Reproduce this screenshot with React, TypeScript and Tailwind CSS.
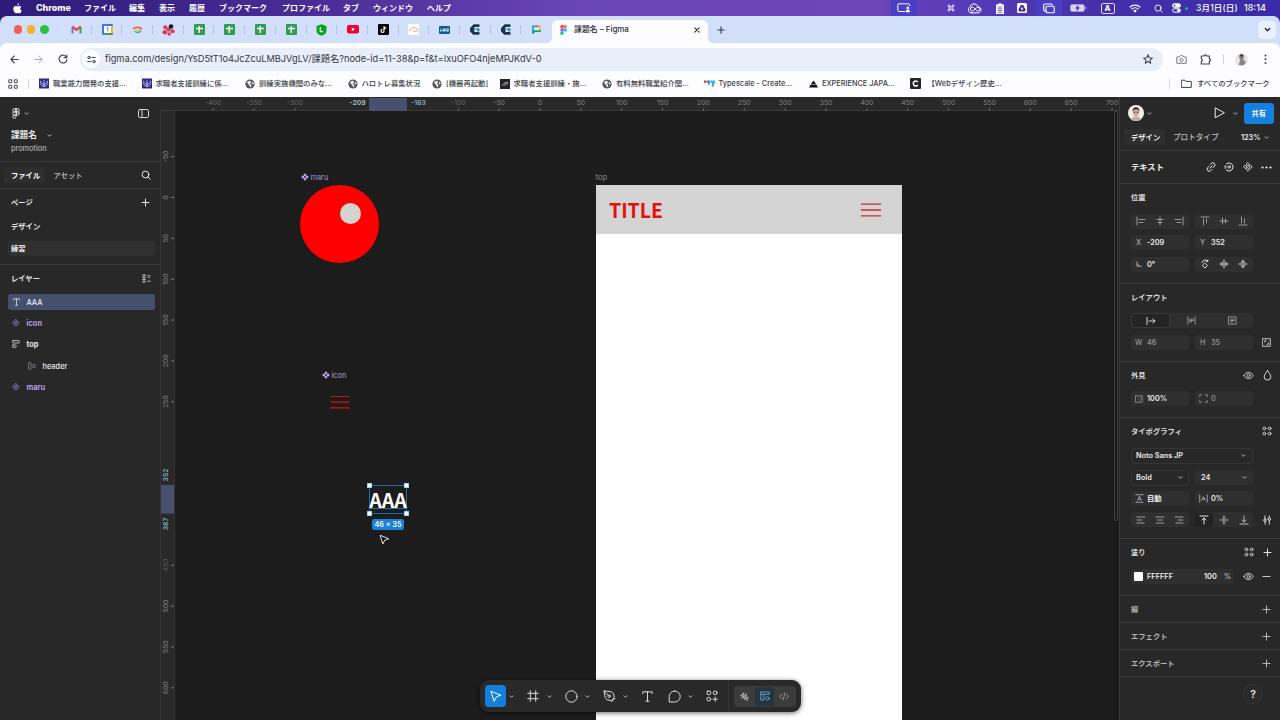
import React from "react";

type Kids = { children?: React.ReactNode };

function Ico({ s = 12, w = 1.6, c = "", vb = "0 0 24 24", h, children }: Kids & { s?: number; w?: number; c?: string; vb?: string; h?: number }) {
  return (
    <svg width={s} height={h ?? s} viewBox={vb} fill="none" stroke="currentColor" strokeWidth={w} strokeLinecap="round" strokeLinejoin="round" className={"shrink-0 " + c}>
      {children}
    </svg>
  );
}

const Chevron = ({ c = "text-[#c4c4c4]" }: { c?: string }) => (
  <Ico s={5} w={1.1} vb="0 0 6 6" c={c}><path d="M1.2 2.2 3 4 4.8 2.2" /></Ico>
);
const Plus = ({ c = "text-[#e4e4e4]" }: { c?: string }) => (
  <Ico s={9} w={1} vb="0 0 9 9" c={c}><path d="M4.5 1v7M1 4.5h7" /></Ico>
);
const Search = ({ s = 10, c = "" }: { s?: number; c?: string }) => (
  <Ico s={s} w={1} vb="0 0 10 10" c={c}><circle cx="4.5" cy="4.5" r="3.4" /><path d="m7 7 2.2 2.2" /></Ico>
);
const Component = ({ s = 9 }: { s?: number }) => (
  <Ico s={s} w={0.9} vb="0 0 10 10">
    <path d="M5 .8 6.6 2.4 5 4 3.4 2.4ZM5 6l1.6 1.6L5 9.2 3.4 7.6ZM2.4 3.4 4 5 2.4 6.6.8 5ZM7.6 3.4 9.2 5 7.6 6.6 6 5Z" />
  </Ico>
);
const SolidComponent = () => (
  <svg width="8" height="8" viewBox="0 0 8 8" fill="#c3a6f3"><path d="M4 .2 5.7 1.9 4 3.6 2.3 1.9ZM4 4.4l1.7 1.7L4 7.8 2.3 6.1ZM1.9 2.3 3.6 4 1.9 5.7.2 4ZM6.1 2.3 7.8 4 6.1 5.7 4.4 4Z" /></svg>
);
const FourDots = () => (
  <Ico s={10} w={0.9} vb="0 0 10 10">
    <circle cx="2.4" cy="2.4" r="1.4" /><circle cx="7.6" cy="2.4" r="1.4" /><circle cx="2.4" cy="7.6" r="1.4" /><circle cx="7.6" cy="7.6" r="1.4" />
  </Ico>
);
const Eye = () => (
  <Ico s={11} w={0.9} vb="0 0 11 9"><path d="M.8 4.5C2 2.4 3.6 1.4 5.5 1.4S9 2.4 10.2 4.5C9 6.6 7.400 7.600 5.500 7.600S2 6.600.8 4.500Z" /><circle cx="5.5" cy="4.5" r="1.5" /></Ico>
);
const FigmaMark = () => (
  <Ico s={8} h={11} w={0.95} vb="0 0 8 11">
    <path d="M4 .7H2.300a1.600 1.600 0 0 0 0 3.200H4ZM4 .7h1.700a1.600 1.600 0 0 1 0 3.200H4ZM4 3.900H2.300a1.600 1.600 0 0 0 0 3.200H4ZM4 7.100H2.300a1.600 1.600 0 1 0 1.700 1.600Z" /><circle cx="5.7" cy="5.5" r="1.600" />
  </Ico>
);

/* ---------- macOS menu bar ---------- */

const Cell = ({ w, children }: Kids & { w: string }) => <span className={"flex h-full shrink-0 items-center justify-center " + w}>{children}</span>;

function MenuBar() {
  return (
    <div className="flex h-4 w-full shrink-0 items-center text-[8px] font-bold leading-none text-white">
      <span className="flex w-[36px] shrink-0 pl-[13px]">
        <svg width="9" height="11" viewBox="0 0 18 22" fill="#fff"><path d="M12.400.5c.2 2.200-1.900 4.400-4 4.300-.2-2.100 1.800-4.200 4-4.300ZM16.800 7.600c-3.200 2-2.700 6.400.7 7.800-.8 2.300-2.500 5.300-4.600 5.300-1.300 0-1.900-.8-3.500-.8s-2.300.8-3.500.8C3.200 20.700.6 16 .6 12.200c0-3.900 2.500-6.100 5-6.100 1.500 0 2.800 1 3.700 1 .9 0 2.400-1.100 4.200-1.100 1.300 0 2.500.6 3.300 1.600Z" /></svg>
      </span>
      <span className="w-[48px] shrink-0 text-[8.900px] font-extrabold">Chrome</span>
      <span className="w-[45px] shrink-0">ファイル</span>
      <span className="w-[30px] shrink-0">編集</span>
      <span className="w-[30px] shrink-0">表示</span>
      <span className="w-[30px] shrink-0">履歴</span>
      <span className="w-[63px] shrink-0">ブックマーク</span>
      <span className="w-[61px] shrink-0">プロファイル</span>
      <span className="w-[30px] shrink-0">タブ</span>
      <span className="w-[54px] shrink-0">ウィンドウ</span>
      <span className="shrink-0">ヘルプ</span>
      <div className="ml-auto flex h-full shrink-0 items-center">
        <Cell w="w-[26px] bg-[#4a40c8]">
          <svg width="14" height="10" viewBox="0 0 14 10" fill="none" stroke="#fff"><path d="M8 8.500H2A1.200 1.200 0 0 1 .8 7.300V2A1.200 1.200 0 0 1 2 .8h9.500a1.200 1.200 0 0 1 1.200 1.200v1" strokeWidth="1" /><circle cx="10.800" cy="4.900" r="1.300" fill="#fff" stroke="none" /><path d="M8.800 9.200V8a1.200 1.200 0 0 1 1.200-1.200h1.600A1.200 1.200 0 0 1 12.800 8v1.200Z" fill="#fff" stroke="none" /></svg>
        </Cell>
        <Cell w="ml-[23px] w-[22px]"><Ico s={8} w={1} vb="0 0 10 10"><path d="M3.500 3.500h3v3h-3ZM3.500 3.500H2.300a1.200 1.200 0 1 1 1.200-1.200ZM6.500 3.500V2.300a1.200 1.200 0 1 1 1.200 1.200ZM6.500 6.500h1.200a1.200 1.200 0 1 1-1.200 1.200ZM3.500 6.500v1.200a1.200 1.200 0 1 1-1.200-1.200Z" /></Ico></Cell>
        <Cell w="w-[26px]">
          <Ico s={14} h={11} w={1} vb="0 0 14 11"><path d="M4 9.900h6a3 3 0 0 0 2.600-4.600A3.200 3.200 0 0 0 10 3.700 4.200 4.200 0 0 0 2 3.900a3.200 3.200 0 0 0 2 6Z" /><path d="M6.500 5.500 5.500 4.600a1.900 1.900 0 1 0 0 2.900l3-2.700a1.900 1.900 0 1 1 .3 2.900L7.500 6.500" /></Ico>
        </Cell>
        <Cell w="w-[23px]"><svg width="10" height="11" viewBox="0 0 10 11"><path d="M1 1.500h2V.5h4v1h2V11H1Z" fill="#fff" /><path d="M2.600 4h4.800M2.600 5.800h4.800M2.600 7.600h4.800M2.600 9.300h4.800" stroke="#4630a8" strokeWidth=".7" /></svg></Cell>
        <Cell w="w-[22px]"><svg width="10" height="10" viewBox="0 0 10 10"><rect width="10" height="10" rx="1.500" fill="#fff" /><path d="M3.900 2h2.200L8.800 7l-1 1.500H2.200L1.200 7ZM5 3.900 3.500 6.600h3Z" fill="#3c2c9c" fillRule="evenodd" /></svg></Cell>
        <Cell w="ml-[3px] w-[26px] bg-[#4a3ec4]"><Ico s={12} h={11} w={1.1} vb="0 0 12 11"><path d="M3 8H2A1.300 1.300 0 0 1 .7 6.700V2.300A1.300 1.300 0 0 1 2 1h6a1.300 1.300 0 0 1 1.300 1" /><rect x="3" y="3.300" width="8.300" height="6.500" rx="1.300" /></Ico></Cell>
        <Cell w="w-[33px]"><svg width="17" height="8" viewBox="0 0 17 8"><rect x=".4" y=".4" width="14" height="7.200" rx="2.200" fill="#d8d2f5" stroke="#b9b0e6" strokeWidth=".6" /><path d="M8.700.8 5 4.500h2.300l-1 2.900 3.700-3.900H7.800Z" fill="#2d2388" /><path d="M15.500 2.600v2.800a1.500 1.500 0 0 0 0-2.800" fill="#b9b0e6" /></svg></Cell>
        <Cell w="w-[25px]"><span className="flex h-[11px] w-[14px] items-center justify-center rounded-[2px] border border-[#ddd8ff] text-[8px]">A</span></Cell>
        <Cell w="w-[29px]"><svg width="12" height="9" viewBox="0 0 12 9" fill="none" stroke="#fff" strokeWidth="1.300"><path d="M.6 3.400a7.600 7.600 0 0 1 10.800 0M2.500 5.300a5 5 0 0 1 7 0" /><path d="M4.200 6.800a2.500 2.500 0 0 1 3.600 0L6 8.700Z" fill="#fff" stroke="none" /></svg></Cell>
        <Cell w="w-[18px]"><Search s={9} /></Cell>
        <Cell w="w-[18px]"><svg width="9" height="10" viewBox="0 0 9 10" fill="none" stroke="#fff"><rect x=".5" y=".8" width="8" height="3.400" rx="1.700" fill="#fff" /><circle cx="2.500" cy="2.500" r=".9" fill="#3a2fa8" stroke="none" /><rect x=".5" y="5.800" width="8" height="3.400" rx="1.700" /><circle cx="6.500" cy="7.500" r="1.400" fill="#fff" stroke="none" /></svg></Cell>
        <span className="mt-px size-[3px] rounded-full bg-[#35a98f]" />
        <span className="ml-[8px] w-[48px] text-[8.500px] font-medium tracking-[0.150px]">3月1日(日)</span>
        <span className="w-[36px] text-[9.100px] font-medium">18:14</span>
      </div>
    </div>
  );
}

/* ---------- Chrome tab strip ---------- */

const Sheets = () => (<svg width="11" height="11" viewBox="0 0 11 11"><rect width="11" height="11" rx="1" fill="#2f9e4f" /><path d="M2 4.500h7M5.300 2v7" stroke="#fff" strokeWidth="1.500" /></svg>);
const LetterC = () => (<svg width="10" height="11" viewBox="0 0 10 11"><rect width="10" height="11" rx="1" fill="#eef3f6" /><path d="M0 4 3.500.3H9.500V3H4.500v5h5v2.700H3L0 7.500Z" fill="#17365c" /><path d="M5.500 4.200H9.500v3.300H7V6H5.500Z" fill="#2f8ac6" /></svg>);

const favicons: React.ReactNode[] = [
  <svg width="11" height="9" viewBox="0 0 11 9" fill="none" strokeWidth="2"><path d="M1.500 8.500V2" stroke="#4285f4" /><path d="M9.500 8.500V2" stroke="#34a853" /><path d="m1.300 1.500 4.200 3.400 4.200-3.400" stroke="#ea4335" /></svg>,
  <svg width="11" height="11" viewBox="0 0 11 11"><rect width="11" height="11" rx="1.200" fill="#3b78e0" /><path d="M9 2h2v7H9Z" fill="#fbbc04" /><path d="M2 9h7v2H2Z" fill="#34a853" /><path d="M9 9h2L9 11Z" fill="#ea4335" /><rect x="2" y="2" width="7" height="7" fill="#fff" /><path d="m4.600 4.200 1.200-.7v4" stroke="#3b78e0" strokeWidth=".9" fill="none" /></svg>,
  <svg width="11" height="8" viewBox="0 0 11 8" fill="none" strokeWidth="1.500"><path d="M1 2.800C3 1.200 5 .8 7.500 1.500L10 3" stroke="#f0564d" /><path d="M2.500 4h5.500" stroke="#f6c445" /><path d="M3 5.200c2 2 4 1.800 6-.7" stroke="#35b7b0" /></svg>,
  <svg width="13" height="12" viewBox="0 0 13 12"><g fill="#e0364f"><circle cx="3.300" cy="3.200" r="2" /><circle cx="2.800" cy="8.300" r="2.300" /><circle cx="6.700" cy="5.500" r="2.100" /><circle cx="7.200" cy="10" r="1.800" /><circle cx="10.600" cy="7.300" r="2" /></g><circle cx="9" cy="2.500" r="2.300" fill="#15172d" /></svg>,
  <Sheets />, <Sheets />, <Sheets />, <Sheets />,
  <svg width="11" height="12" viewBox="0 0 11 12"><path d="M5.500.3 10.500 2v5c0 2.500-2.500 4-5 4.800C3 11 .5 9.500.5 7V2Z" fill="#06a51b" /><path d="M4.300 3.300v4.400h2.900" stroke="#fff" strokeWidth="1.200" fill="none" /></svg>,
  <svg width="12" height="9" viewBox="0 0 12 9"><rect width="12" height="8.600" rx="2" fill="#f0002e" /><path d="M4.800 2.500 8 4.300 4.800 6.200Z" fill="#fff" /></svg>,
  <svg width="11" height="11" viewBox="0 0 11 11" fill="none"><rect width="11" height="11" rx="1" fill="#05060c" /><path d="M6 2.200v4.700a1.500 1.500 0 1 1-1.500-1.500M6 2.300c.2 1.200 1 1.800 2.200 1.900" stroke="#fff" strokeWidth="1.200" /></svg>,
  <svg width="11" height="11" viewBox="0 0 11 11" fill="none"><rect width="11" height="11" rx="1" fill="#fff" /><path d="M2.500 7.500C.8 6.300 2 4.300 3.600 4.800 4.800 3 7 2.800 8 4.400c2 0 2.300 2.600.5 3.200-1.600.4-3-.5-4-1.800" stroke="#e8a164" strokeWidth=".9" /></svg>,
  <svg width="11" height="8" viewBox="0 0 11 8"><rect width="11" height="8" rx="1" fill="#0f5a96" /><path d="M1.800 2.500v3l1.300-1.500 1.300 1.500v-3M5.500 5.300V2.700l1.300 2.600V2.700M8 2.700h1.300v2.600H8Z" stroke="#fff" strokeWidth=".7" fill="none" /></svg>,
  <LetterC />, <LetterC />,
  <svg width="9" height="9" viewBox="0 0 9 9" fill="none" strokeWidth="1.500"><path d="M1 6V1.200H5" stroke="#2684fc" /><path d="M6 1.200h2v4" stroke="#fbbc04" /><path d="M8 5v1.300H2.500L1 8.300V5" stroke="#00ac47" /><path d="M4.500 1.200h2" stroke="#ea4335" /></svg>,
];

function TabStrip() {
  return (
    <div className="flex h-[27px] w-full shrink-0 items-center rounded-t-[7px] bg-[#d2dffb]">
      <div className="flex w-[61px] shrink-0 items-center gap-[4.700px] pl-[13.500px]">
        <span className="size-[8.600px] rounded-full bg-[#f0605a]" />
        <span className="size-[8.600px] rounded-full bg-[#f3b32e]" />
        <span className="size-[8.600px] rounded-full bg-[#2cbf44]" />
      </div>
      {favicons.map((f, i) => (
        <div key={i} className="relative flex w-[30.700px] shrink-0 items-center justify-center">
          {f}
          {i < 15 && <span className="absolute right-0 h-[9px] w-px bg-[#b5c3e0]" />}
        </div>
      ))}
      <div className="relative flex h-[23px] w-[155.500px] shrink-0 items-center self-end rounded-t-[6px] bg-[#fdfdff] pb-[3px]">
        <svg className="absolute -left-[5px] bottom-0" width="5" height="5"><path d="M5 0v5H0a5 5 0 0 0 5-5" fill="#fdfdff" /></svg>
        <svg className="absolute -right-[5px] bottom-0" width="5" height="5"><path d="M0 0v5h5a5 5 0 0 1-5-5" fill="#fdfdff" /></svg>
        <svg className="ml-[8px]" width="7" height="10" viewBox="0 0 8 12"><path d="M4 0H2a2 2 0 0 0 0 4h2Z" fill="#f24e1e" /><path d="M4 0h2a2 2 0 0 1 0 4H4Z" fill="#ff7262" /><path d="M4 4H2a2 2 0 0 0 0 4h2Z" fill="#a259ff" /><circle cx="6" cy="6" r="2" fill="#1abcfe" /><path d="M4 8H2a2 2 0 1 0 2 2Z" fill="#0acf83" /></svg>
        <span className="ml-[7px] text-[7.900px] font-medium text-[#2a2c33]">課題名 – Figma</span>
        <Ico s={6} w={1.1} vb="0 0 6 6" c="ml-auto mr-[7.500px] text-[#2b2e36]"><path d="m.8.8 4.400 4.400M5.200.8.8 5.200" /></Ico>
      </div>
      <Ico s={8} w={1.1} vb="0 0 8 8" c="ml-[9.500px] text-[#2f3a52]"><path d="M4 .8v6.400M.8 4h6.400" /></Ico>
      <span className="ml-auto mr-[4px] flex h-[18px] w-[18px] items-center justify-center rounded-[5px] bg-[#e9f1ff] text-[#1e2430]"><Ico s={7} w={1.300} vb="0 0 7 7"><path d="m1.300 2.500 2.200 2.200 2.200-2.200" /></Ico></span>
    </div>
  );
}

function AddressBar() {
  return (
    <div className="w-full shrink-0 bg-[#d2dffb]">
      <div className="flex h-[32px] w-full items-center rounded-t-[7px] bg-[#fdfdff] text-[#44474e]">
        <Ico s={9} w={1.100} vb="0 0 9 9" c="ml-[10px]"><path d="M8.300 4.500H1M4.300 1 .9 4.500 4.300 8" /></Ico>
        <Ico s={9} w={1} vb="0 0 9 9" c="ml-[15px] text-[#a9abb1]"><path d="M.7 4.500H8M4.700 1l3.400 3.500L4.700 8" /></Ico>
        <Ico s={10} w={1.200} vb="0 0 10 10" c="ml-[15px]"><path d="M8.600 3.500A3.900 3.900 0 1 0 8.900 5.500M8.800 1v2.700H6.100" /></Ico>
        <div className="ml-[12px] flex h-[23px] w-[1083px] shrink-0 items-center rounded-full bg-[#e9eff8] pl-[2px]">
          <span className="flex size-[18px] items-center justify-center rounded-full bg-[#fdfdff]">
            <Ico s={9} w={1} vb="0 0 9 9"><circle cx="2" cy="2.400" r="1.200" /><path d="M4.800 2.400H8.300M.7 6.600h3.500" /><circle cx="7" cy="6.600" r="1.200" /></Ico>
          </span>
          <span className="ml-[5px] whitespace-nowrap text-[9.250px] text-[#34373d]">figma.com/design/YsD5tT1o4JcZcuLMBJVgLV/課題名?node-id=11-38&p=f&t=IxuOFO4njeMPJKdV-0</span>
          <Ico s={10} w={1} vb="0 0 24 24" c="ml-auto mr-[10px] stroke-[2.600px]"><path d="m12 2 3 7 7.500.600-5.700 5 1.700 7.400L12 18l-6.500 4 1.700-7.400-5.700-5L9 9Z" /></Ico>
        </div>
        <svg className="ml-[13px] shrink-0" width="11" height="9" viewBox="0 0 11 9" fill="none" stroke="#777a80" strokeWidth="1"><path d="M.8 2h2.400l1-1.300h2.600L7.800 2h2.400v6.300H.8Z" /><circle cx="5.500" cy="5" r="1.600" /></svg>
        <Ico s={12} h={11} w={1.200} vb="0 0 12 11" c="ml-[13px]"><path d="M1.300 2h2.800a1.200 1.200 0 0 1 2.400 0h2.800v2.800a1.200 1.200 0 0 1 0 2.400V10h-8V7.500a1.400 1.400 0 0 0 0-2.700Z" /></Ico>
        <span className="ml-[11px] h-[10px] w-px bg-[#c4d6f6]" />
        <svg className="ml-[11px]" width="13" height="13" viewBox="0 0 13 13"><circle cx="6.500" cy="6.500" r="6.300" fill="#e4e2e2" /><path d="M4.300 3.500a2.300 2.300 0 0 1 4.500 0l-.4 3L11 9.500 8 12.500 3.500 12l1.600-4Z" fill="#8b8584" /><path d="M4.300 3.600a2.200 2.200 0 0 1 4.400-.3Z" fill="#38312f" /></svg>
        <svg className="ml-[16px]" width="3" height="11" viewBox="0 0 3 11" fill="#44474e"><circle cx="1.500" cy="1.500" r="1" /><circle cx="1.500" cy="5.300" r="1" /><circle cx="1.500" cy="9.100" r="1" /></svg>
      </div>
    </div>
  );
}

const Globe = () => (<svg width="10" height="10" viewBox="0 0 10 10"><circle cx="5" cy="5" r="4.600" fill="#54575c" /><path d="M2 3.200 5 2l.8 1.500L4 5l2 .7-.3 2.600M7.300 3.200l1.300 1.300-1.500.5Z" fill="#fff" stroke="#fff" strokeWidth=".5" /></svg>);
const Crest = () => (<svg width="11" height="11" viewBox="0 0 11 11"><rect width="11" height="11" fill="#2b2a8a" /><path d="M2 2.500v3c0 2 1.500 3 3.500 3.300C7.500 8.500 9 7.500 9 5.500v-3M5.500 2v6.500M3.500 5l2 2 2-2" stroke="#cfd0f2" strokeWidth="1" fill="none" /></svg>);

function Bookmark({ icon, w, label, gap = "gap-[4px]" }: { icon: React.ReactNode; w: string; label: string; gap?: string }) {
  return (
    <div className={"flex shrink-0 items-center whitespace-nowrap " + w + " " + gap}>
      <span className="flex w-[10px] shrink-0 justify-center">{icon}</span>
      <span>{label}</span>
    </div>
  );
}

function Bookmarks() {
  return (
    <div className="flex h-[22px] w-full shrink-0 items-center bg-[#fdfdff] pb-[5px] text-[7.350px] font-medium leading-[9px] text-[#3c3f45]">
      <svg className="ml-[8px] shrink-0" width="10" height="10" viewBox="0 0 10 10" fill="none" stroke="#4b4e54" strokeWidth="1"><path d="M.8.800h2.900v2.900H.8ZM6.300.8h2.900v2.900H6.300ZM.8 6.300h2.900v2.900H.8ZM6.300 6.300h2.900v2.900H6.300Z" /></svg>
      <span className="ml-[10px] mr-[10px] h-[10px] w-px shrink-0 bg-[#cfd8e8]" />
      <Bookmark w="w-[102.500px]" icon={<Crest />} label="職業能力開発の支援..." />
      <Bookmark w="w-[103.500px]" icon={<Crest />} label="求職者支援訓練に係..." />
      <Bookmark w="w-[102.500px]" icon={<Globe />} label="訓練実施機関のみな..." />
      <Bookmark w="w-[84.500px]" icon={<Globe />} label="ハロトレ募集状況" />
      <Bookmark w="w-[67.500px]" icon={<Globe />} label="[機器再起動]" />
      <Bookmark w="w-[102.500px]" icon={<svg width="10" height="10" viewBox="0 0 10 10"><rect width="10" height="10" fill="#222327" /><path d="m2 7 3-3.500V7M5.500 3.500H8L6.500 5l1.500.5" stroke="#bbb" strokeWidth=".8" fill="none" /></svg>} label="求職者支援訓練・施..." />
      <Bookmark w="w-[102.500px]" icon={<Globe />} label="有料無料職業紹介関..." />
      <Bookmark w="w-[103.500px]" icon={<svg width="11" height="8" viewBox="0 0 11 8" className="shrink-0"><path d="M0 .5h2.500v2.300H0Z" fill="#d6333b" /><path d="M3 .5h3.500v2H5.600V5H4.200V2.800H3Z" fill="#2b87d8" /><path d="M7 .5h4v1.800L9.200 7H7.800L8 3H7Z" fill="#36b3e6" /></svg>} label="Typescale - Create..." />
      <Bookmark w="w-[102.500px]" icon={<svg width="9" height="8" viewBox="0 0 9 8"><path d="M4.500.5 7 4H2ZM1.700 4.500h5.600L9 7.500H0Z" fill="#111" /></svg>} label="EXPERIENCE JAPA..." />
      <Bookmark w="w-[120px]" gap="gap-[7px]" icon={<svg width="11" height="11" viewBox="0 0 11 11" className="shrink-0"><rect width="11" height="11" rx="1" fill="#242424" /><path d="M7.800 4A2.500 2.500 0 1 0 7.800 7" stroke="#fff" strokeWidth="1.500" fill="none" /></svg>} label="【Webデザイン歴史..." />
      <span className="ml-auto h-[10px] w-px shrink-0 bg-[#cfd8e8]" />
      <Ico s={11} h={9} w={1} vb="0 0 11 9" c="ml-[11px] mr-[5px]"><path d="M.7 1.200h3.300l1 1.200h5.300v6H.7Z" /></Ico>
      <span className="w-[83px] shrink-0 whitespace-nowrap">すべてのブックマーク</span>
    </div>
  );
}

/* ---------- Figma left panel ---------- */

function Layer({ icon, name, on = false, indent = false, purple = false, bold = false }: { icon: React.ReactNode; name: string; on?: boolean; indent?: boolean; purple?: boolean; bold?: boolean }) {
  return (
    <div className="flex h-[21.400px] items-center pl-[8px] pr-[5px]">
      <div className={"flex h-[16px] w-full items-center rounded-[3px] " + (on ? "bg-[#454f6e] " : "") + (indent ? "pl-[19px] " : "pl-[3px] ") + (purple ? "text-[#b79ce8]" : "text-[#eaeaea]")}>
        <span className={"flex w-[10px] justify-center " + (indent ? "opacity-45" : "opacity-85")}>{icon}</span>
        <span className={"ml-[5.500px] pt-px text-[7.400px] " + (bold ? "font-bold" : "font-medium")}>{name}</span>
      </div>
    </div>
  );
}

function LeftPanel() {
  return (
    <aside className="flex w-[160px] shrink-0 flex-col bg-[#282828] font-semibold text-[#e6e6e6]">
      <div className="flex h-[65px] flex-col border-b border-[#3a3a3a]">
        <div className="flex h-[32px] items-center pl-[12px] pr-[11px]">
          <FigmaMark />
          <span className="ml-[4px] flex"><Chevron /></span>
          <Ico s={11} h={9} w={0.900} vb="0 0 11 9" c="ml-auto"><rect x=".5" y=".5" width="10" height="8" rx="1.400" /><path d="M4 .5v8" /></Ico>
        </div>
        <div className="flex h-[12px] items-center pl-[11px] text-[8.600px] font-bold">課題名<span className="ml-[10px] flex"><Chevron /></span></div>
        <div className="flex h-[14px] items-center pl-[11px] pt-px text-[7.400px] font-normal text-[#c6c6c6]">promotion</div>
      </div>
      <div className="flex h-[27px] items-center border-b border-[#3a3a3a] pl-[4px] pr-[9px]">
        <span className="flex h-[16px] w-[41px] items-center rounded-[3px] bg-[#2e2e2e] pl-[7px] font-bold text-white">ファイル</span>
        <span className="ml-[8.500px] font-medium text-[#c0c0c0]">アセット</span>
        <Search c="ml-auto" />
      </div>
      <div className="h-[76px] border-b border-[#3a3a3a]">
        <div className="flex h-[26px] items-center pl-[11px] pr-[10px]">ページ<span className="ml-auto flex"><Plus /></span></div>
        <div className="flex h-[22px] items-center pl-[11px]">デザイン</div>
        <div className="flex h-[22px] items-center pl-[8px] pr-[5px]"><div className="flex h-[15px] w-full items-center rounded-[3px] bg-[#303030] pl-[3px] font-bold">練習</div></div>
      </div>
      <div className="flex h-[26px] items-center pl-[11px] pr-[9px]">
        レイヤー
        <Ico s={9} h={9} w={0.900} vb="0 0 9 9" c="ml-auto text-[#c0c0c0]"><path d="M.5 1h3M.5 3.300h3M.5 5.600h3M.5 8h3M2 1v7M5.500 1.800h2.800M5.500 7.200h2.800M6.500 3.500l.5.600.5-.6" /></Ico>
      </div>
      <Layer on name="AAA" icon={<Ico s={7} w={0.900} vb="0 0 7 8" h={8}><path d="M.6 2V.8h5.800V2M3.500.8v6.400M2.500 7.200h2" /></Ico>} />
      <Layer purple bold name="icon" icon={<Component s={8} />} />
      <Layer bold name="top" icon={<Ico s={8} w={0.900} vb="0 0 8 8"><rect x=".6" y=".6" width="6.800" height="2.400" rx=".6" /><rect x=".6" y="5" width="3.500" height="2.400" rx=".6" /></Ico>} />
      <Layer indent name="header" icon={<Ico s={8} w={0.900} vb="0 0 8 8"><rect x=".6" y=".6" width="2.400" height="6.800" rx=".6" /><rect x="4.800" y="2.500" width="2.500" height="3" rx=".6" /></Ico>} />
      <Layer purple bold name="maru" icon={<Component s={8} />} />
    </aside>
  );
}

/* ---------- Canvas ---------- */

const STEP = 40.86;
const topTicks = [-400, -350, -300, -100, -50, 0, 50, 100, 150, 200, 250, 300, 350, 400, 450, 500, 550, 600, 650, 700];
const sideTicks = [-50, 0, 50, 100, 150, 200, 250, 450, 500, 550, 600];

function TopRuler() {
  return (
    <svg width="959" height="14" className="block shrink-0 bg-[#292929]" fontSize="6.8" textAnchor="middle">
      <path d="M0 13.500h959" stroke="#3a3a3a" />
      <rect x="209" y="1" width="38" height="13" fill="#48506f" />
      {topTicks.map((t) => {
        const x = 380 + (t / 50) * STEP;
        return (<g key={t}><text x={x} y="7.800" fill={t < -50 ? "#666" : "#828282"}>{t}</text><path d={`M${x} 11v3`} stroke="#666" /></g>);
      })}
      <text x="197.500" y="7.800" fill="#a9c3cf" fontWeight="600">-209</text>
      <text x="258.500" y="7.800" fill="#86b4c4" fontWeight="600">-163</text>
    </svg>
  );
}

function SideRuler() {
  return (
    <svg width="15" height="609" className="block shrink-0 bg-[#292929]" fontSize="6.8" textAnchor="middle">
      <path d="M14.500 0v609M.5 0v609" stroke="#363636" />
      <rect x="1" y="374" width="13" height="28.500" fill="#48506f" />
      {sideTicks.map((t) => {
        const y = 86.500 + (t / 50) * STEP;
        return (<g key={t}><text transform={`translate(8.400 ${y}) rotate(-90)`} fill={t === 450 ? "#5c5c5c" : "#808080"}>{t}</text><path d={`M11 ${y}h3`} stroke="#777" /></g>);
      })}
      <text transform="translate(8.400 364) rotate(-90)" fill="#7ea9b8" fontWeight="600">352</text>
      <text transform="translate(8.400 413) rotate(-90)" fill="#7ea9b8" fontWeight="600">387</text>
    </svg>
  );
}

const Handle = ({ c }: { c: string }) => <span className={"absolute size-[5px] border border-[#9fd0f2] bg-white " + c} />;
const bigText = "font-bold leading-none";

/* Origin of the canvas surface is (175, 111) in window coordinates. */
function Canvas() {
  return (
    <div className="relative h-[609px] min-w-0 flex-1 overflow-hidden bg-[#1c1c1c] font-normal">
      <div className="absolute left-[126px] top-[61px] flex h-[10px] items-center gap-[1.500px] text-[7.400px] text-[#a993d8]"><SolidComponent /><span>maru</span></div>
      <div className="absolute left-[125.300px] top-[73.800px] size-[78.600px] rounded-full bg-[#fe0000]" />
      <div className="absolute left-[165px] top-[92px] size-[21.300px] rounded-full bg-[#d3d3cf]" />
      <div className="absolute left-[420.500px] top-[61px] flex h-[10px] items-center text-[7.600px] text-[#8c8c8c]">top</div>
      <div className="absolute left-[421px] top-[74px] flex h-[535px] w-[306px] flex-col bg-white">
        <div className="flex h-[49px] items-center justify-between bg-[#d4d4d4] pl-[13px] pr-[21px]">
          <span className={bigText + " mt-px text-[19.500px] font-['Noto_Sans_CJK_JP'] text-[#e60f0f]"}>TITLE</span>
          <svg width="20" height="14" viewBox="0 0 20 14" stroke="#c92d31" strokeWidth="1.300"><path d="M0 1.200h20M0 7h20M0 12.900h20" /></svg>
        </div>
      </div>
      <div className="absolute left-[147px] top-[259px] flex h-[10px] items-center gap-[1.500px] text-[7.400px] text-[#b4a6d0]"><SolidComponent /><span>icon</span></div>
      <svg className="absolute left-[155px] top-[284px]" width="20" height="14" stroke="#cc1414" strokeWidth="1.200"><path d="M.5 1.500h19M.5 7.200h19M.3 12.900h19.200" /></svg>
      <div className="absolute left-[194px] top-[374px] flex h-[29px] w-[38px] items-center justify-center border border-[#1d6ea5]">
        <span className={bigText + " text-[19.600px] font-['Noto_Sans_CJK_JP'] text-white"}>AAA</span>
        <span className="absolute inset-x-0 bottom-[4px] h-px bg-[#1d6ea5]" />
        <Handle c="-left-[3px] -top-[3px]" /><Handle c="-right-[3px] -top-[3px]" /><Handle c="-bottom-[3px] -left-[3px]" /><Handle c="-bottom-[3px] -right-[3px]" />
      </div>
      <div className="absolute left-[197px] top-[408px] flex h-[11px] w-[32px] items-center justify-center rounded-[2px] bg-[#1a7fd6] text-[7.200px] font-semibold text-white">46 × 35</div>
      <svg className="absolute left-[204px] top-[423px]" width="11" height="12" viewBox="0 0 11 12"><path d="M1.200 1.300 9.800 4.800 5.800 6 3.800 10Z" fill="#111" stroke="#dedede" strokeWidth="1" strokeLinejoin="round" /></svg>
    </div>
  );
}

/* ---------- Figma right panel ---------- */

const Box = ({ w = "w-[58px]", c = "", children }: Kids & { w?: string; c?: string }) => (
  <div className={"flex h-[15px] shrink-0 items-center rounded-[3px] bg-[#2f2f2f] " + w + " " + c}>{children}</div>
);
const Trio = ({ children }: Kids) => <Box c="justify-around px-[0px] text-[#a8a8a8]">{children}</Box>;
const Row = ({ h = "h-[21px]", children }: Kids & { h?: string }) => <div className={"flex items-center gap-[6px] " + h}>{children}</div>;
const Section = ({ h, children }: Kids & { h: string }) => <section className={"border-b border-[#3a3a3a] pl-[11px] " + h}>{children}</section>;
const Title = ({ t, children }: Kids & { t: string }) => (
  <div className="flex h-[26px] items-center pr-[8.500px] font-bold text-[#dedede]">{t}<span className="ml-auto flex items-center gap-[9px]">{children}</span></div>
);
const A = ({ d, s = 10 }: { d: string; s?: number }) => <Ico s={s} w={0.900} vb="0 0 10 10"><path d={d} /></Ico>;
const Empty = ({ t }: { t: string }) => (
  <Section h="h-[27px]"><div className="flex h-[26px] items-center pr-[9px] text-[#b4b4b4]">{t}<span className="ml-auto flex"><Plus c="text-[#b8b8b8]" /></span></div></Section>
);

function RightPanel() {
  return (
    <aside className="flex w-[161px] shrink-0 flex-col border-l border-[#3c3c3c] bg-[#282828] font-semibold text-[#ececec]">
      <div className="h-[54px] shrink-0 border-b border-[#3a3a3a]">
        <div className="flex h-[32px] items-center pl-[8px] pr-[6px]">
          <svg width="16" height="16" viewBox="0 0 16 16"><circle cx="8" cy="8" r="8" fill="#f1f0ef" /><path d="M3 14.200C4 12 6 11.500 8 11.500s4 .5 5 2.700A8 8 0 0 1 3 14.200" fill="#b9b4b2" /><ellipse cx="8" cy="7.500" rx="3" ry="4" fill="#cfaea3" /><path d="M4.700 7C4.300 3.500 6 2.200 8 2.200S11.700 3.500 11.300 7C10.500 4.500 9.500 4.500 8 4.500S5.500 4.500 4.700 7" fill="#3a2f2d" /><path d="M5.300 7.300h2.200M8.500 7.300h2.200" stroke="#4b3a36" strokeWidth=".8" /></svg>
          <span className="ml-[3px] flex"><Chevron /></span>
          <Ico s={11} h={12} w={1} vb="0 0 11 12" c="ml-auto"><path d="M1.200 1.200v9.600L10 6Z" /></Ico>
          <span className="ml-[8px] mr-[6px] flex"><Chevron /></span>
          <span className="flex h-[21px] w-[30.500px] items-center justify-center rounded-[3px] bg-[#1580de] font-bold text-white">共有</span>
        </div>
        <div className="flex h-[16px] items-center pl-[4px]">
          <span className="flex h-[16px] w-[41px] items-center rounded-[3px] bg-[#2e2e2e] pl-[7px] font-bold">デザイン</span>
          <span className="ml-[8px] text-[7.600px] font-medium text-[#bdbdbd]">プロトタイプ</span>
          <span className="ml-auto">123%</span>
          <span className="ml-[3.500px] mr-[11px] flex"><Chevron /></span>
        </div>
      </div>
      <Section h="h-[33px]">
        <div className="flex h-[32px] items-center text-[8.300px] font-bold">
          テキスト
          <span className="ml-auto flex items-center gap-[8.500px] pr-[8px]">
            <Ico s={10} w={1} vb="0 0 10 10"><path d="m4 2.700 1.300-1.300a2.100 2.100 0 0 1 3 3L7 5.700M6 7.300 4.700 8.600a2.100 2.100 0 0 1-3-3L3 4.300M3.700 6.300l2.600-2.600" /></Ico>
            <Ico s={10} w={0.950} vb="0 0 10 10"><path d="M2.500 1.700a4.100 4.100 0 1 1 0 6.600M1.300 6.500a4.100 4.100 0 0 1 0-3M3 5h3.500M4.700 3.200 6.500 5 4.700 6.800" /></Ico>
            <Component s={10} />
            <svg width="11" height="3" viewBox="0 0 11 3" fill="#eee"><circle cx="1.500" cy="1.500" r="1.100" /><circle cx="5.500" cy="1.500" r="1.100" /><circle cx="9.500" cy="1.500" r="1.100" /></svg>
          </span>
        </div>
      </Section>
      <Section h="h-[100px]">
        <Title t="位置" />
        <Row h="h-[22px]">
          <Trio><A d="M1 1v8M3 3.500h6M3 6.500h4" /><A d="M5 1v8M2 3.500h6M3.200 6.500h3.600" /><A d="M9 1v8M1 3.500h6M3 6.500h4" /></Trio>
          <Trio><A d="M1 1h8M3.500 3v6M6.500 3v4" /><A d="M1 5h8M3.500 2v6M6.500 3v4" /><A d="M1 9h8M3.500 1v6M6.500 3v4" /></Trio>
        </Row>
        <Row>
          <Box><span className="w-[16px] pl-[5px] font-medium text-[#a8a8a8]">X</span>-209</Box>
          <Box><span className="w-[16px] pl-[5px] font-medium text-[#a8a8a8]">Y</span>352</Box>
        </Row>
        <Row h="h-[22px]">
          <Box><span className="flex w-[16px] pl-[5px] text-[#a8a8a8]"><Ico s={6} w={0.900} vb="0 0 6 6"><path d="M1 .8v4.400h4.400M1 3a2.200 2.200 0 0 1 2.200 2.200" /></Ico></span>0°</Box>
          <Box c="justify-around"><A d="M5 4.200 7.500 6.600 5 9 2.500 6.600ZM2 3.500A3.200 3.200 0 0 1 7.500 2M7.800.8V2.500H6" /><A d="M5 1v8M3 3.200v3.600M7 3.200v3.600M3 5H1M7 5h2" /><A d="M1 5h8M3.200 3h3.600M3.200 7h3.600M5 3V1M5 7v2" /></Box>
        </Row>
      </Section>
      <Section h="h-[78px]">
        <Title t="レイアウト" />
        <Row>
          <Box w="w-[122px]">
            <span className="flex h-[15px] w-[39px] items-center justify-center rounded-[3px] border border-[#383838] bg-[#242424]"><A d="M1 1.500v7M3 5h6M6.800 2.800 9 5 6.800 7.200" /></span>
            <span className="flex w-[42px] justify-center text-[#a8a8a8]"><A s={9} d="M1 1v8M9 1v8M3 3.500h4M3 5h4M3 6.500h2" /></span>
            <span className="flex w-[41px] justify-center text-[#a8a8a8]"><A s={9} d="M1 1h8v8H1ZM3 3.500h4M3 5h4M3 6.500h2" /></span>
          </Box>
        </Row>
        <Row h="h-[22px]">
          <Box c="font-medium text-[#979797]"><span className="w-[16px] pl-[4px]">W</span>46</Box>
          <Box c="font-medium text-[#979797]"><span className="w-[16px] pl-[5px]">H</span>35</Box>
          <span className="ml-auto mr-[9px] flex"><A s={9} d="M.8.8h8.400v8.400H.8ZM3 4.500V3h1.500M7 5.500V7H5.500" /></span>
        </Row>
      </Section>
      <Section h="h-[56px]">
        <Title t="外見"><Eye /><Ico s={9} h={11} w={0.950} vb="0 0 9 11"><path d="M4.500.8C6 3 7.800 4.500 7.800 6.800a3.300 3.300 0 0 1-6.600 0C1.200 4.500 3 3 4.500.8Z" /></Ico></Title>
        <Row>
          <Box><span className="flex w-[16px] justify-center text-[#a8a8a8]"><A s={8} d="M1 1h8v8H1ZM6 3h.1M4 5h.1M6 7h.1M7.500 5h.1" /></span>100%</Box>
          <Box c="font-medium text-[#979797]"><span className="flex w-[16px] justify-center"><A s={9} d="M.8 3V.8H3M7 .8h2.200V3M9.200 7v2.200H7M3 9.200H.8V7" /></span>0</Box>
        </Row>
      </Section>
      <Section h="h-[121px]">
        <Title t="タイポグラフィ"><FourDots /></Title>
        <Row h="h-[23px]"><div className="flex h-[16px] w-[122px] items-center justify-between rounded-[3px] border border-[#353535] pl-[4px] pr-[6px]">Noto Sans JP<Chevron /></div></Row>
        <Row>
          <div className="flex h-[16px] w-[58px] items-center justify-between rounded-[3px] border border-[#353535] pl-[4px] pr-[5px]">Bold<Chevron /></div>
          <Box c="justify-between pl-[6px] pr-[6px]">24<Chevron /></Box>
        </Row>
        <Row>
          <Box><span className="flex w-[16px] justify-center text-[#b8b8b8]"><A s={9} d="M1 .8h8M1 9.200h8M3 7.200l2-4.700 2 4.700M3.700 5.600h2.600" /></span>自動</Box>
          <Box><span className="flex w-[16px] justify-center text-[#b8b8b8]"><A s={9} d="M.8 1v8M9.200 1v8M3 7l2-4 2 4M3.700 5.600h2.600" /></span>0%</Box>
        </Row>
        <Row>
          <Trio><A d="M1 2h8M1 5h5M1 8h7" /><A d="M1 2h8M2.500 5h5M1.500 8h7" /><A d="M1 2h8M4 5h5M2 8h7" /></Trio>
          <Box c="text-[#c4c4c4]"><span className="flex h-[14px] w-[18px] items-center justify-center rounded-[2px] bg-[#222] text-white"><A d="M1 1h8M5 9V3M3 5l2-2 2 2" /></span><span className="flex w-[21px] justify-center"><A d="M1 5h8M5 .8v2.700M5 6.500v2.700M4 2.700l1 1 1-1M4 7.300l1-1 1 1" /></span><span className="flex w-[19px] justify-center"><A d="M1 9h8M5 1v6M3 5l2 2 2-2" /></span></Box>
          <span className="ml-auto mr-[8.500px] flex"><A d="M3 .8v3M3 6.500v2.700M7.300.8v2M7.300 5.500v3.700M1.700 5.200a1.300 1.300 0 1 0 2.600 0 1.300 1.300 0 1 0-2.600 0M6 4.100a1.300 1.300 0 1 0 2.600 0 1.300 1.300 0 1 0-2.600 0" /></span>
        </Row>
      </Section>
      <Section h="h-[57px]">
        <Title t="塗り"><FourDots /><Plus /></Title>
        <Row h="h-[22px]">
          <Box w="w-[103px]" c="pl-[3px]"><span className="size-[9px] rounded-[1px] bg-white" /><span className="ml-[4px] w-[50px] tracking-[0.050px]">FFFFFF</span><span className="ml-[7px]">100</span><span className="ml-[7px] font-medium text-[#bdbdbd]">%</span></Box>
          <span className="ml-auto mr-[9px] flex items-center gap-[8.500px]"><Eye /><A s={9} d="M1 5h8" /></span>
        </Row>
      </Section>
      <Empty t="線" />
      <Empty t="エフェクト" />
      <Empty t="エクスポート" />
      <span className="ml-[123px] mt-[7px] flex size-[20px] items-center justify-center rounded-full border border-[#353535] bg-[#2a2a2a] text-[10.500px]">?</span>
    </aside>
  );
}

/* ---------- Floating toolbar ---------- */

function Toolbar() {
  return (
    <div className="absolute left-[480px] top-[583px] flex h-[32px] w-[321px] items-center rounded-[9px] bg-[#292929] pl-[5px] text-[#dcdcdc] shadow-[0_1px_5px_rgba(0,0,0,0.6)]">
      <span className="flex h-[22px] w-[21px] shrink-0 items-center justify-center rounded-[4px] bg-[#1480dd] text-white"><Ico s={12} w={1} vb="0 0 12 12"><path d="M1.200 1.400 11 5.200 6.500 6.700 4.300 10.900Z" /></Ico></span>
      <Cell w="w-[11px]"><Chevron /></Cell>
      <Cell w="ml-[6px] w-[20px]"><Ico s={12} w={1} vb="0 0 12 12"><path d="M3.300.8v10.400M8.700.8v10.400M.8 3.300h10.400M.8 8.700h10.400" /></Ico></Cell>
      <Cell w="ml-px w-[11px]"><Chevron /></Cell>
      <Cell w="ml-[6px] w-[20px]"><Ico s={13} w={1} vb="0 0 13 13"><circle cx="6.500" cy="6.500" r="5.700" /></Ico></Cell>
      <Cell w="ml-px w-[11px]"><Chevron /></Cell>
      <Cell w="ml-[6px] w-[20px]"><Ico s={13} w={1} vb="0 0 13 13"><path d="M1 1.200 2.200 7.500c.3 1.300 1.300 2.200 2.500 2.400l3.600.700 3-3L10.600 4C10.300 2.900 9.400 2 8.200 1.800ZM1 1.200 5.200 5.400M8.500 11.800l3.500-3.500" /><circle cx="6.200" cy="6.200" r="1.300" /></Ico></Cell>
      <Cell w="ml-px w-[11px]"><Chevron /></Cell>
      <Cell w="ml-[6px] w-[20px]"><Ico s={11} w={1} vb="0 0 11 11"><path d="M.8 2.600V.8h9.400v1.800M5.500.8v9.400M4 10.200h3" /></Ico></Cell>
      <Cell w="ml-[7px] w-[20px]"><Ico s={13} w={1} vb="0 0 13 13"><path d="M6.700 1a5.500 5.500 0 1 1 0 11H1.200V6.500A5.500 5.500 0 0 1 6.700 1Z" /></Ico></Cell>
      <Cell w="ml-px w-[11px]"><Chevron /></Cell>
      <Cell w="ml-[6px] w-[20px]"><Ico s={12} w={1} vb="0 0 12 12"><rect x="1" y="1" width="3.600" height="3.600" rx="1" /><circle cx="9.200" cy="2.800" r="1.900" /><circle cx="2.800" cy="9.200" r="1.900" /><path d="M9.200 7v4.400M7 9.200h4.400" /></Ico></Cell>
      <span className="ml-auto mr-[5px] h-[32px] w-px bg-[#353535]" />
      <div className="mr-[5px] flex h-[21px] w-[62px] shrink-0 items-center rounded-[4px] bg-[#3c3c3c] text-[#a8a8a8]">
        <Cell w="w-[21px]"><Ico s={11} w={1.100} vb="0 0 11 11"><path d="M1.500 5 5 1.800 3 7.500 7.500 3 5.500 8.500 9 6 8 9.500" /></Ico></Cell>
        <span className="flex h-[19px] w-[19px] items-center justify-center rounded-[3px] bg-[#263440] text-[#5a9fd0]"><Ico s={10} w={1} vb="0 0 10 10"><path d="M.8 1h8.400v2.400H.8ZM.8 3.500V9h3V3.500" /><circle cx="7.400" cy="7.400" r="1.700" /></Ico></span>
        <Cell w="w-[20px]"><Ico s={10} h={9} w={0.900} vb="0 0 11 9"><path d="M3 1.800.7 4.500 3 7.200M8 1.800l2.300 2.700L8 7.200M6.300.8 4.700 8.200" /></Ico></Cell>
      </div>
    </div>
  );
}

export default function App() {
  return (
    <div className="flex h-[720px] w-[1280px] flex-col overflow-hidden bg-[linear-gradient(90deg,#2d1a78_0%,#4a2d98_25%,#6a45b4_45%,#7045b8_68%,#5a3cba_74%,#4630aa_85%,#3b2ba8_100%)] font-['Inter','Noto_Sans_CJK_JP',sans-serif]">
      <MenuBar />
      <TabStrip />
      <AddressBar />
      <Bookmarks />
      <main className="relative flex h-[623px] w-full text-[7.300px] leading-[9px]">
        <LeftPanel />
        <div className="flex w-[959px] shrink-0 flex-col">
          <TopRuler />
          <div className="flex">
            <SideRuler />
            <Canvas />
            <div className="flex h-[609px] w-[5px] shrink-0 justify-start bg-[#1a1a1a]"><span className="h-[410px] w-[4px] rounded-b-[3px] border border-[#424242] bg-[#1a1a1a]" /></div>
          </div>
        </div>
        <RightPanel />
        <Toolbar />
      </main>
    </div>
  );
}
